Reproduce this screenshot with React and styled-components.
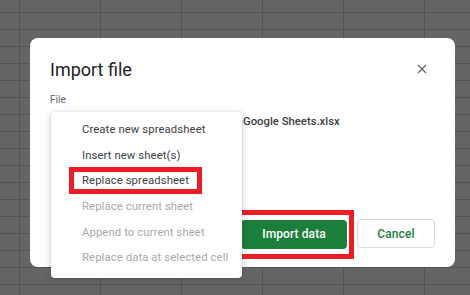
import React from 'react';
import styled, { createGlobalStyle } from 'styled-components';

const GlobalStyle = createGlobalStyle`
    html, body {
        margin: 0;
        height: 100%;
    }
    body {
        font-family: Roboto, "Liberation Sans", Arial, sans-serif;
        -webkit-font-smoothing: antialiased;
    }
`;

const menuItems = [
    { label: 'Create new spreadsheet' },
    { label: 'Insert new sheet(s)' },
    { label: 'Replace spreadsheet', marked: true },
    { label: 'Replace current sheet', disabled: true },
    { label: 'Append to current sheet', disabled: true },
    { label: 'Replace data at selected cell', disabled: true },
];

const App = () => {
    return (
        <>
            <GlobalStyle />
            <Sheet>
                <Dialog>
                    <Header>
                        <Title>Import file</Title>
                        <CloseButton aria-label="Close">
                            <svg width="10" height="10" viewBox="0 0 10 10">
                                <path d="M1 1L9 9M9 1L1 9" stroke="#5f6368" strokeWidth="1.2" fill="none" />
                            </svg>
                        </CloseButton>
                    </Header>

                    <FieldLabel>File</FieldLabel>
                    <FileName>Google Sheets.xlsx</FileName>

                    <Footer>
                        <Highlight $pad="5px 2px" $margin="-10px 3px -11px -7px">
                            <PrimaryButton>Import data</PrimaryButton>
                        </Highlight>
                        <SecondaryButton>Cancel</SecondaryButton>
                    </Footer>

                    <Menu>
                        {menuItems.map(item => (
                            <MenuItem key={item.label} $disabled={item.disabled}>
                                {item.marked ? (
                                    <Highlight $pad="0 8px" $margin="0 0 0 -13px">
                                        {item.label}
                                    </Highlight>
                                ) : (
                                    item.label
                                )}
                            </MenuItem>
                        ))}
                    </Menu>
                </Dialog>
            </Sheet>
        </>
    );
};

export default App;

const Sheet = styled.div`
    width: 470px;
    height: 295px;
    box-sizing: border-box;
    padding: 38px 0 0 30px;
    overflow: hidden;
    background-color: #656565;
    background-image:
        linear-gradient(to right, #545454 1px, transparent 1px),
        linear-gradient(to bottom, #545454 1px, transparent 1px);
    background-size: 81px 17px;
    background-position: 19px 12px;
`;

const Dialog = styled.div`
    position: relative;
    width: 425px;
    height: 229px;
    box-sizing: border-box;
    padding: 20px 20px 19px 20px;
    display: flex;
    flex-direction: column;
    background: #fff;
    border-radius: 8px;
`;

const Header = styled.div`
    display: flex;
    justify-content: space-between;
    align-items: center;
`;

const Title = styled.h2`
    margin: 0;
    font-size: 18px;
    line-height: 24px;
    font-weight: 400;
    color: #202124;
`;

const CloseButton = styled.button`
    width: 24px;
    height: 24px;
    margin: -2px 1px 0 0;
    padding: 0;
    border: none;
    background: none;
    display: flex;
    align-items: center;
    justify-content: center;
`;

const FieldLabel = styled.div`
    margin-top: 11px;
    font-size: 10px;
    line-height: 14px;
    color: #5f6368;
`;

const FileName = styled.div`
    margin-top: 7px;
    padding-left: 193px;
    font-size: 11.3px;
    line-height: 16px;
    font-weight: 500;
    color: #3c4043;
`;

const Footer = styled.div`
    margin-top: auto;
    display: flex;
    justify-content: flex-end;
    align-items: center;
`;

const Highlight = styled.span`
    display: inline-flex;
    align-items: center;
    padding: ${props => props.$pad};
    margin: ${props => props.$margin};
    border: 5px solid #ec1c24;
`;

const BaseButton = styled.button`
    height: 29px;
    box-sizing: border-box;
    border-radius: 4px;
    font-family: Roboto, "Liberation Sans", Arial, sans-serif;
    font-size: 12px;
    font-weight: 500;
    letter-spacing: 0.1px;
    padding: 0;
`;

const PrimaryButton = styled(BaseButton)`
    width: 106px;
    border: none;
    background: #1b7f3b;
    color: #fff;
`;

const SecondaryButton = styled(BaseButton)`
    width: 78px;
    border: 1px solid #dadce0;
    background: #fff;
    color: #1b7f3b;
`;

const Menu = styled.div`
    position: absolute;
    left: 21px;
    top: 74px;
    width: 191px;
    padding: 5px 0 7px;
    background: #fff;
    border-radius: 4px;
    box-shadow: 0 2px 6px 2px rgba(60, 64, 67, 0.15), 0 1px 2px rgba(60, 64, 67, 0.3);
`;

const MenuItem = styled.div`
    height: 25.6px;
    display: flex;
    align-items: center;
    padding-left: 31px;
    font-size: 11.3px;
    line-height: 17px;
    letter-spacing: 0.1px;
    color: ${props => (props.$disabled ? '#a7a9ac' : '#3c4043')};
    white-space: nowrap;
`;
